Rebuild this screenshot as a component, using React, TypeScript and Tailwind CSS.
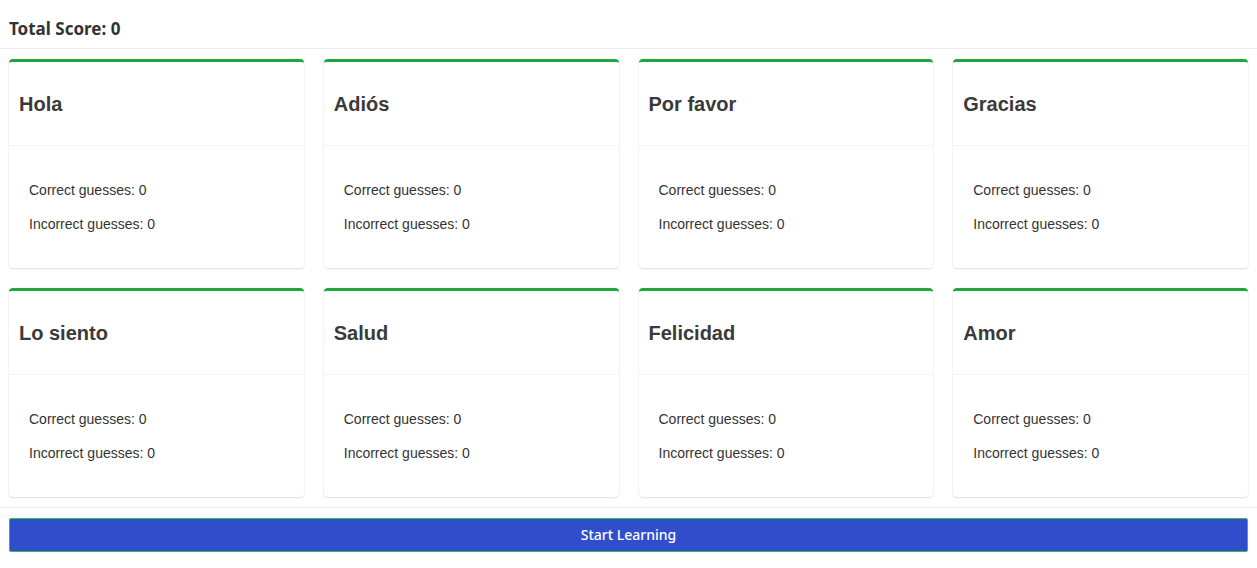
import React from "react";

const words = ["Hola", "Adiós", "Por favor", "Gracias", "Lo siento", "Salud", "Felicidad", "Amor"];

function Card({ title }: { title: string }) {
  return (
    <div className="bg-white border-t-[3px] border-t-[#1ea83c] rounded-[4px] shadow-[0_1px_2px_rgba(0,0,0,0.12),0_0_0_1px_rgba(0,0,0,0.015)]">
      <div className="h-[84px] flex items-center px-[10px] border-b border-[#f3f3f3]">
        <h2 className="text-[20px] font-bold text-[#3a3a3a] font-['Liberation_Sans',Arial,sans-serif]">{title}</h2>
      </div>
      <div className="py-[34px] px-[20px] flex flex-col gap-[14px] text-[14px] leading-[20px] text-[#333] font-['Liberation_Sans',Arial,sans-serif]">
        <p>Correct guesses: 0</p>
        <p>Incorrect guesses: 0</p>
      </div>
    </div>
  );
}

export default function App() {
  return (
    <div className="min-h-[568px] bg-white font-['Noto_Sans',sans-serif]">
      <header className="h-[49px] border-b border-[#efefef] px-[9px] pt-[18px]">
        <h1 className="text-[17px] leading-[22px] font-bold text-[#333]">Total Score: 0</h1>
      </header>
      <main className="px-[9px] pt-[10px] pb-[10px] border-b border-[#efefef]">
        <div className="grid grid-cols-4 gap-5">
          {words.map((w) => (
            <Card key={w} title={w} />
          ))}
        </div>
      </main>
      <div className="px-[9px] pt-[10px]">
        <button className="w-full h-[34px] bg-[#304ecc] border border-[#2fbf4a] rounded-[2px] text-white text-[14px] leading-[20px] font-medium">
          Start Learning
        </button>
      </div>
    </div>
  );
}
